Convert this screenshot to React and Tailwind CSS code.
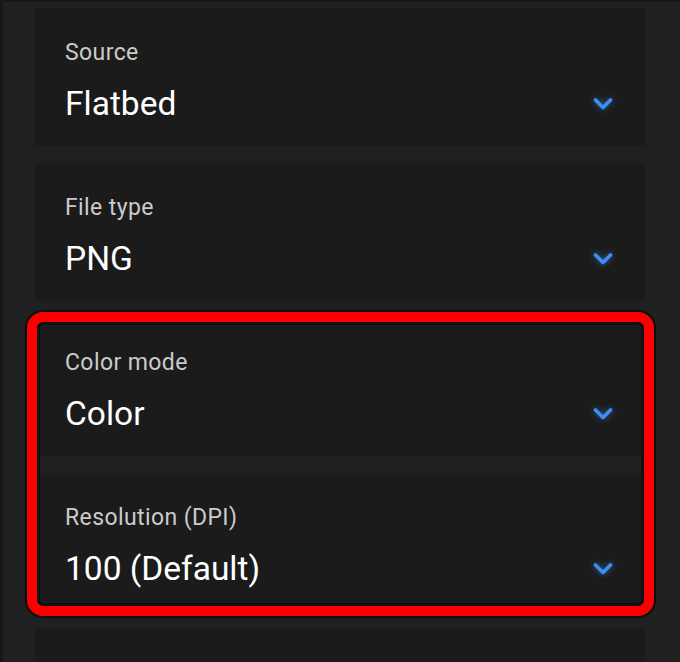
import React from "react";

const settings = [
  { label: "Source", value: "Flatbed" },
  { label: "File type", value: "PNG" },
  { label: "Color mode", value: "Color" },
  { label: "Resolution (DPI)", value: "100 (Default)" },
  { label: "Save file to", value: "Scans" },
];

const Chevron = () => (
  <svg width="20" height="14" viewBox="0 0 20 14" className="drop-shadow-[0_0_3px_rgba(60,140,240,0.6)]">
    <polyline
      points="2.5,3 10,10.5 17.5,3"
      fill="none"
      stroke="#3d8fef"
      strokeWidth="3.6"
      strokeLinecap="round"
      strokeLinejoin="round"
    />
  </svg>
);

const SettingCard = ({ label, value }) => (
  <div className="h-[138px] shrink-0 bg-[#1b1b1b] rounded-[3px] pl-[30px] pr-[32px] pt-[31px]">
    <div className="text-[23px] leading-[28px] tracking-[0.4px] text-[#cbcbcb]">{label}</div>
    <div className="mt-[16px] flex items-center justify-between">
      <span className="text-[33.5px] leading-[42px] text-white">{value}</span>
      <Chevron />
    </div>
  </div>
);

const App = () => {
  return (
    <div
      className="relative h-[662px] w-[680px] overflow-hidden bg-[#202020] border-l-[3px] border-t-[2px] border-[#171717]"
      style={{ fontFamily: 'Roboto, "Noto Sans", sans-serif' }}
    >
      <div className="flex flex-col gap-[17px] pt-[6px] pl-[32px] pr-[35px]">
        {settings.map((s) => (
          <SettingCard key={s.label} label={s.label} value={s.value} />
        ))}
      </div>

      {/* highlight annotation */}
      <div className="pointer-events-none absolute left-[24px] top-[310px] h-[304px] w-[627px] rounded-[16px] border-[10px] border-[#fa0000] shadow-[0_0_0_2px_rgba(0,0,0,0.6),inset_0_0_0_3px_#101010]" />
    </div>
  );
};

export default App;
